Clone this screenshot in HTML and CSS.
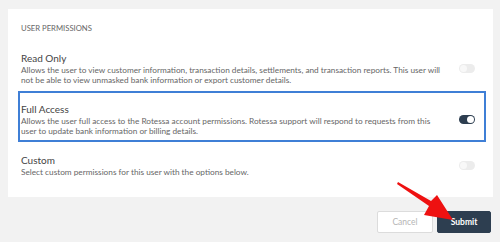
FILE: index.html
```html
<!DOCTYPE html>
<html lang="en">
<head>
<meta charset="UTF-8">
<meta name="viewport" content="width=device-width, initial-scale=1.0">
<title>user permissions</title>
<link rel="stylesheet" href="styles.css">
</head>
<body>
    <div class="card">
        <div class="card-title">User Permissions</div>
        <div class="option">
            <div class="option-text">
                <div class="option-name">Read Only</div>
                <div class="option-desc">Allows the user to view customer information, transaction details, settlements, and transaction reports. This user will<br>not be able to view unmasked bank information or export customer details.</div>
            </div>
            <span class="toggle"></span>
        </div>
        <div class="option selected">
            <div class="option-text">
                <div class="option-name">Full Access</div>
                <div class="option-desc">Allows the user full access to the Rotessa account permissions. Rotessa support will respond to requests from this<br>user to update bank information or billing details.</div>
            </div>
            <span class="toggle on"></span>
        </div>
        <div class="option">
            <div class="option-text">
                <div class="option-name">Custom</div>
                <div class="option-desc">Select custom permissions for this user with the options below.</div>
            </div>
            <span class="toggle"></span>
        </div>
    </div>
    <div class="actions">
        <button class="btn btn-cancel">Cancel</button>
        <button class="btn btn-submit">Submit</button>
    </div>
    <!-- red pointer over the submit button -->
    <svg class="pointer" width="500" height="242" viewBox="0 0 500 242">
        <polygon points="398,182 431,201 437,195 453,220 424,215 429,206 397,184" fill="#ee1111"/>
    </svg>
</body>
</html>
```

FILE: styles.css
```css
body {
    margin: 0;
    padding: 0;
    font-family: Lato, "Open Sans", sans-serif;
    background-color: #f2f2f2;
    position: relative;
    height: 242px;
    overflow: hidden;
}
.card {
    margin: 9px 7px 0 8px;
    background-color: #ffffff;
    padding: 13px 7px 14px 10px;
}
.card-title {
    font-size: 7.7px;
    line-height: 12px;
    text-transform: uppercase;
    color: #666;
    margin: 0 0 6px 3px;
}
.option {
    display: flex;
    align-items: center;
    border: 2px solid transparent;
    padding: 9px 9px 4px 1px;
}
.option.selected {
    border-color: #3f7fd6;
}
.option-text {
    flex: 1;
}
.option-name {
    font-size: 10px;
    line-height: 14px;
    color: #444;
}
.option-desc {
    font-size: 8.25px;
    line-height: 10px;
    color: #666;
    white-space: nowrap;
}
.toggle {
    width: 16px;
    height: 9px;
    border-radius: 5px;
    background-color: #ececec;
    position: relative;
    margin-left: 15px;
}
.toggle::after {
    content: "";
    position: absolute;
    top: 1px;
    left: 1px;
    width: 7px;
    height: 7px;
    border-radius: 50%;
    background-color: #f8f8f8;
}
.toggle.on {
    background-color: #2d3e50;
}
.toggle.on::after {
    left: 8px;
    background-color: #ffffff;
}
.actions {
    display: flex;
    justify-content: flex-end;
    gap: 4px;
    margin: 14px 9px 0 0;
}
.btn {
    height: 22px;
    font-family: Lato, "Open Sans", sans-serif;
    font-size: 8.5px;
    border-radius: 2px;
    padding: 0;
}
.btn-cancel {
    width: 56px;
    background-color: #ffffff;
    border: 1px solid #dcdcdc;
    color: #b5b5b5;
}
.btn-submit {
    width: 54px;
    background-color: #2d3e50;
    border: 1px solid #2d3e50;
    color: #ffffff;
    font-weight: bold;
}
.pointer {
    position: absolute;
    top: 0;
    left: 0;
}
```
